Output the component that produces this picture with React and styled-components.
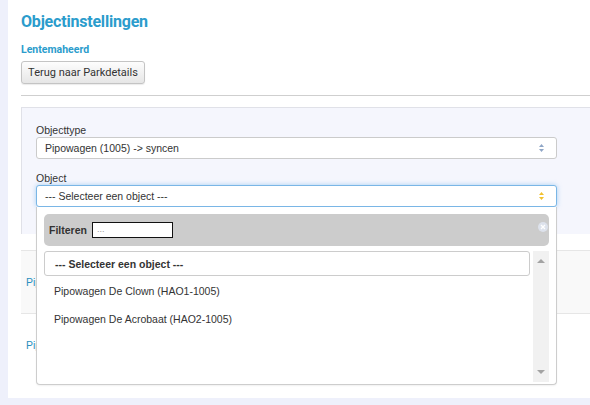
import React from "react";
import styled, { createGlobalStyle } from "styled-components";

const Global = createGlobalStyle`
  html, body { margin: 0; padding: 0; }
  body {
    background: #eef0fb;
    overflow: hidden;
    font-family: "Liberation Sans", Arial, sans-serif;
    font-size: 10.5px;
    color: #333;
  }
`;

const Page = styled.div`
  margin-left: 8px;
  height: 398px;
  background: #fff;
  padding: 12px 0 0 13px;
  box-sizing: border-box;
  overflow: hidden;
`;

const Title = styled.h1`
  margin: 0;
  font-family: Roboto, "Liberation Sans", sans-serif;
  font-weight: 700;
  font-size: 16px;
  letter-spacing: -0.2px;
  line-height: 20px;
  color: #2b9ccc;
`;

const Sub = styled.h2`
  margin: 12px 0 0;
  font-family: Roboto, "Liberation Sans", sans-serif;
  font-weight: 700;
  font-size: 10.5px;
  line-height: 12px;
  color: #2b9ccc;
`;

const Button = styled.button`
  display: block;
  margin-top: 5px;
  height: 23px;
  width: 124px;
  padding: 0;
  border: 1px solid #c4c4c4;
  border-radius: 3px;
  background: linear-gradient(#fdfdfd, #e6e6e6);
  font-family: Roboto, "Liberation Sans", sans-serif;
  font-size: 11px;
  color: #333;
  box-shadow: 0 1px 1px rgba(0,0,0,0.08);
`;

const Rule = styled.hr`
  margin: 11px 0 0;
  border: 0;
  border-top: 1px solid #cfcfcf;
`;

const FormPanel = styled.div`
  margin-top: 11px;
  background: #f5f6fd;
  border-top: 1px solid #e0e1e8;
  border-left: 1px solid #e0e1e8;
  padding: 16px 0 27px 14px;
`;

const Field = styled.div`
  width: 521px;
  position: relative;
  & + & { margin-top: 13px; }
`;

const Label = styled.div`
  line-height: 12px;
  margin-bottom: 1px;
  color: #333;
`;

const Select = styled.div`
  height: 22px;
  box-sizing: border-box;
  border: 1px solid ${p => (p.$focus ? "#7ab6e6" : "#cbcbcb")};
  border-radius: 3px;
  background: #fff;
  display: flex;
  align-items: center;
  justify-content: space-between;
  padding: 0 12px 0 8px;
  box-shadow: ${p => (p.$focus ? "0 0 5px rgba(102,175,233,0.55)" : "none")};
  color: #333;
`;

const Arrows = ({ color }) => (
  <svg width="5" height="8" viewBox="0 0 5 8">
    <path d="M2.5 0 L5 3 L0 3 Z" fill={color} />
    <path d="M0 5 L5 5 L2.5 8 Z" fill={color} />
  </svg>
);

const Dropdown = styled.div`
  position: absolute;
  top: 100%;
  left: 0;
  width: 521px;
  height: 178px;
  box-sizing: border-box;
  background: #fff;
  border: 1px solid #cdcdcd;
  border-top: none;
  border-radius: 0 0 4px 4px;
  padding: 7px 7px 0 7px;
  z-index: 5;
  box-shadow: 0 1px 2px rgba(0,0,0,0.06);
`;

const FilterBar = styled.div`
  height: 32px;
  background: #cccccc;
  border-radius: 5px;
  display: flex;
  align-items: center;
  padding-left: 5px;
  position: relative;
`;

const FilterLabel = styled.span`
  font-weight: 700;
  color: #333;
  margin-right: 5px;
`;

const FilterInput = styled.div`
  width: 75px;
  height: 14px;
  border: 1px solid #111;
  background: #fff;
  color: #999;
  font-size: 9px;
  line-height: 12px;
  padding-left: 4px;
`;

const Close = styled.span`
  position: absolute;
  right: 1px;
  top: 8px;
  width: 10px;
  height: 10px;
  border-radius: 50%;
  background: #dde2ec;
  display: flex;
  align-items: center;
  justify-content: center;
`;

const ListArea = styled.div`
  margin-top: 5px;
  display: flex;
  height: 131px;
`;

const Options = styled.div`
  flex: 1;
  padding-right: 3px;
`;

const Option = styled.div`
  height: 28px;
  line-height: 28px;
  padding-left: 10px;
  color: #333;
  ${p => p.$first && `
    height: 25px;
    line-height: 24px;
    box-sizing: border-box;
    border: 1px solid #cccccc;
    border-radius: 3px;
    font-weight: 700;
    margin-bottom: 1px;
  `}
`;

const Scrollbar = styled.div`
  width: 16px;
  background: #f1f1f1;
  display: flex;
  flex-direction: column;
  justify-content: space-between;
  align-items: center;
  padding: 8px 0 8px;
  box-sizing: border-box;
`;

const Tri = ({ down }) => (
  <svg width="8" height="4" viewBox="0 0 8 4">
    <path d={down ? "M0 0 L8 0 L4 4 Z" : "M4 0 L8 4 L0 4 Z"} fill="#a3a3a3" />
  </svg>
);

const Rows = styled.div`
  margin-top: 16px;
`;

const Row = styled.div`
  height: 63px;
  box-sizing: border-box;
  border-top: 1px solid #e6e6e6;
  background: ${p => (p.$alt ? "#f9f9f9" : "#fff")};
  display: flex;
  align-items: center;
  padding-left: 5px;
  color: #2a8fc0;
`;

export default function App() {
  return (
    <>
      <Global />
      <Page>
        <Title>Objectinstellingen</Title>
        <Sub>Lentemaheerd</Sub>
        <Button>Terug naar Parkdetails</Button>
        <Rule />
        <FormPanel>
          <Field>
            <Label>Objecttype</Label>
            <Select>
              <span>Pipowagen (1005) -&gt; syncen</span>
              <Arrows color="#8fa6c6" />
            </Select>
          </Field>
          <Field>
            <Label>Object</Label>
            <Select $focus>
              <span>--- Selecteer een object ---</span>
              <Arrows color="#f2c12e" />
            </Select>
            <Dropdown>
              <FilterBar>
                <FilterLabel>Filteren</FilterLabel>
                <FilterInput>...</FilterInput>
                <Close>
                  <svg width="6" height="6" viewBox="0 0 6 6">
                    <path d="M1 1 L5 5 M5 1 L1 5" stroke="#fff" strokeWidth="1.3" />
                  </svg>
                </Close>
              </FilterBar>
              <ListArea>
                <Options>
                  <Option $first>--- Selecteer een object ---</Option>
                  <Option>Pipowagen De Clown (HAO1-1005)</Option>
                  <Option>Pipowagen De Acrobaat (HAO2-1005)</Option>
                </Options>
                <Scrollbar>
                  <Tri />
                  <Tri down />
                </Scrollbar>
              </ListArea>
            </Dropdown>
          </Field>
        </FormPanel>
        <Rows>
          <Row $alt>Pipowagen De Clown</Row>
          <Row>Pipowagen De Acrobaat</Row>
        </Rows>
      </Page>
    </>
  );
}
